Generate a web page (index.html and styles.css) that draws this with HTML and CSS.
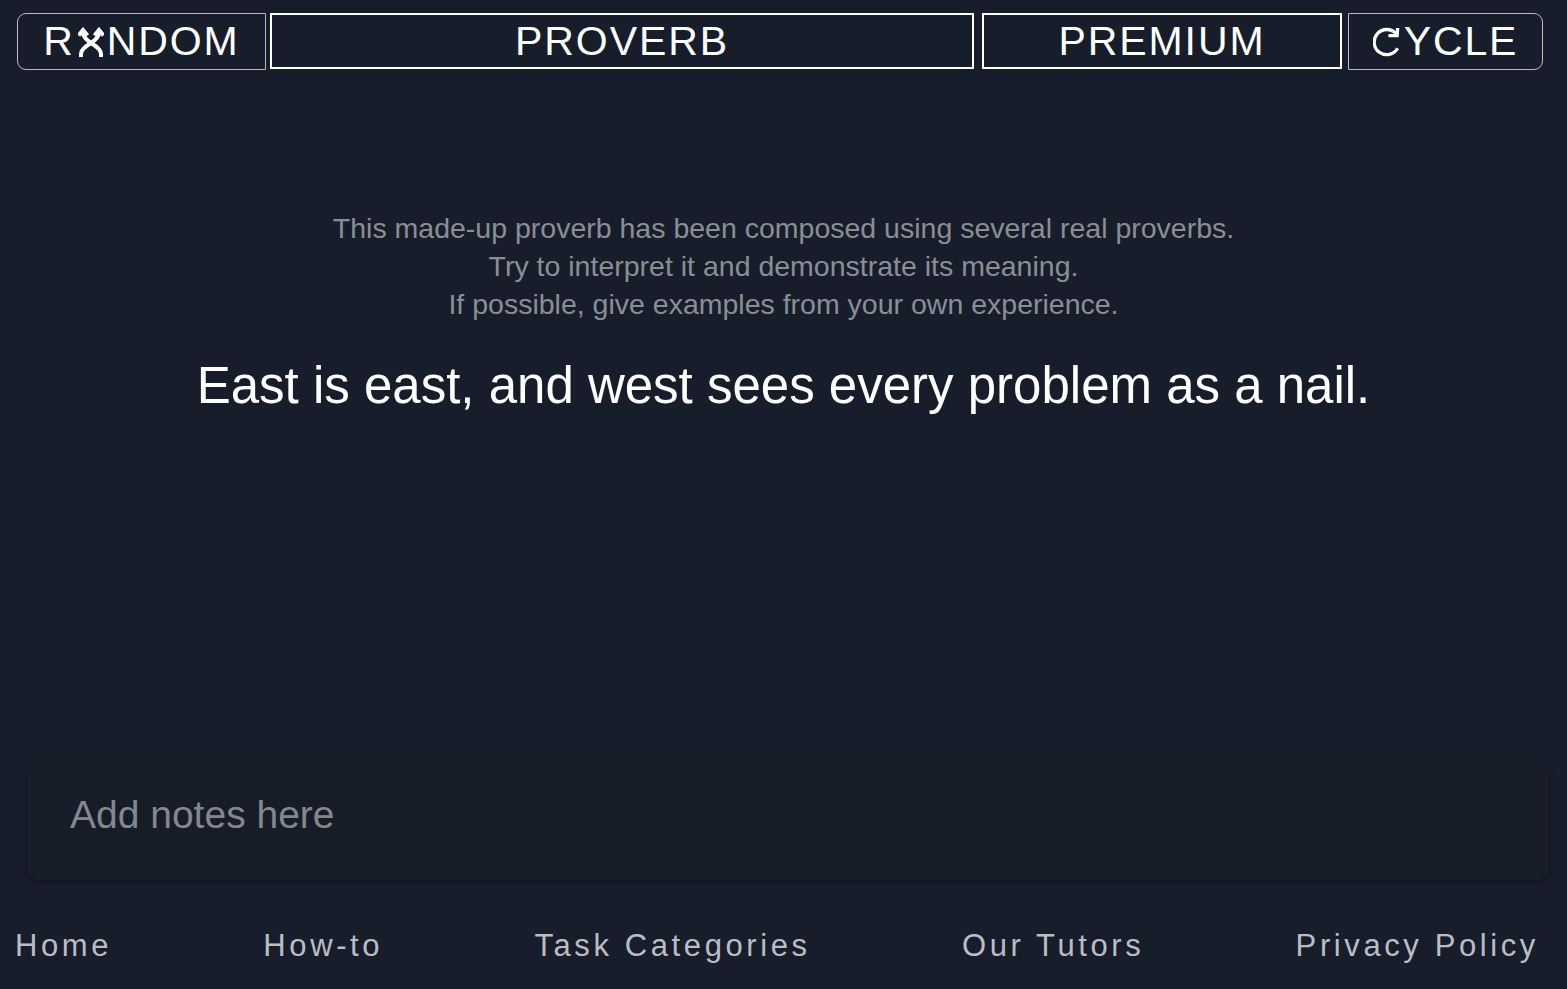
FILE: index.html
```html
<!DOCTYPE html>
<html lang="en">
<head>
<meta charset="utf-8">
<title>Random Proverb</title>
<link rel="stylesheet" href="styles.css">
</head>
<body>
<div class="page">
  <header class="topbar">
    <div class="tab tab-logo">R<svg class="ico-x" viewBox="0 0 26 30" aria-hidden="true"><path d="M3 30 L3 27 Q3 22 13 16 Q21 10.5 21 5.5 L21 3.5" /><path d="M23 30 L23 27 Q23 22 13 16 Q5 10.5 5 5.5 L5 3.5" /><path d="M0.5 8.5 L5 3 L9.5 8.5" /><path d="M16.5 8.5 L21 3 L25.5 8.5" /></svg>NDOM</div>
    <div class="tab tab-proverb">PROVERB</div>
    <div class="tab tab-premium">PREMIUM</div>
    <div class="tab tab-cycle"><svg class="ico-c" viewBox="0 0 30 30" aria-hidden="true"><path d="M25.5 21.5 A13 13 0 1 1 24 6.5" /><path d="M16 8.5 L25 8.5 L25.5 0.5" /></svg>YCLE</div>
  </header>

  <main class="content">
    <p class="intro">This made-up proverb has been composed using several real proverbs.<br>Try to interpret it and demonstrate its meaning.<br>If possible, give examples from your own experience.</p>
    <h1 class="proverb">East is east, and west sees every problem as a nail.</h1>
  </main>

  <div class="notes">Add notes here</div>

  <footer class="footer">
    <a class="flink" href="#">Home</a>
    <a class="flink" href="#">How-to</a>
    <a class="flink" href="#">Task Categories</a>
    <a class="flink" href="#">Our Tutors</a>
    <a class="flink" href="#">Privacy Policy</a>
  </footer>
</div>
</body>
</html>
```

FILE: styles.css
```css
html, body {
  margin: 0;
  padding: 0;
  background: #181d2b;
}
body {
  font-family: "Liberation Sans", Arial, sans-serif;
  color: #ffffff;
}
.page {
  min-height: 989px;
  display: flex;
  flex-direction: column;
}
.topbar {
  display: flex;
  padding: 13px 0 0 17px;
  height: 57px;
}
.tab {
  box-sizing: border-box;
  height: 57px;
  display: flex;
  align-items: center;
  justify-content: center;
  font-size: 41px;
  letter-spacing: 1.9px;
  color: #fff;
  line-height: 1;
}
.tab-logo {
  width: 249px;
  border: 1.5px solid #b9bbc0;
  border-radius: 9px 0 0 9px;
}
.tab-proverb {
  width: 704px;
  margin-left: 4px;
  height: 56px;
  border: 2px solid #ffffff;
}
.tab-premium {
  width: 360px;
  margin-left: 8px;
  height: 56px;
  border: 2px solid #ffffff;
}
.tab-cycle {
  width: 195px;
  margin-left: 6px;
  border: 1.5px solid #b9bbc0;
  border-radius: 0 9px 9px 0;
}
.ico-x {
  width: 26px;
  height: 30px;
  margin: 0 3px 0 3px;
  fill: none;
  stroke: #fff;
  stroke-width: 4;
  stroke-linecap: butt;
  stroke-linejoin: miter;
}
.ico-c {
  width: 29px;
  height: 30px;
  margin-right: 2px;
  fill: none;
  stroke: #fff;
  stroke-width: 3.4;
}
.content {
  flex: 1;
  padding-top: 139px;
  text-align: center;
}
.intro {
  margin: 0;
  font-size: 28.5px;
  line-height: 38px;
  color: #8b8e95;
}
.proverb {
  margin: 33px 0 0 0;
  font-size: 51px;
  line-height: 60px;
  font-weight: normal;
  color: #ffffff;
}
.notes {
  box-sizing: border-box;
  margin: 0 18px 0 27px;
  height: 121px;
  padding: 34px 43px 0 43px;
  font-size: 39px;
  line-height: 44px;
  color: #85878d;
  background: #171c29;
  border-radius: 12px;
  box-shadow: 0 2px 5px rgba(0, 0, 0, 0.35);
}
.footer {
  display: flex;
  justify-content: space-between;
  padding: 48px 28px 25px 15px;
}
.flink {
  font-size: 31px;
  line-height: 36px;
  letter-spacing: 3.6px;
  color: #babdc2;
  text-decoration: none;
}
```
